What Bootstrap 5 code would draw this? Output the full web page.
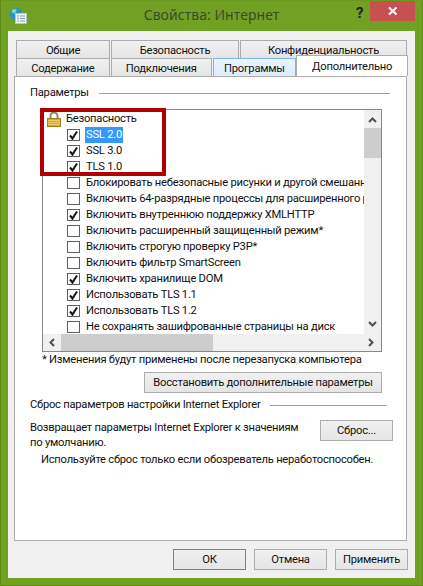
<!DOCTYPE html>
<html lang="ru">
<head>
<meta charset="utf-8">
<title>Свойства: Интернет</title>
<link rel="stylesheet" href="https://cdn.jsdelivr.net/npm/bootstrap@5.3.0/dist/css/bootstrap.min.css">
<style>
html,body{margin:0;background:#71a122;}
body{font-family:Roboto,"Liberation Sans",Arial,sans-serif;font-size:11.2px;letter-spacing:-.24px;line-height:16px;color:#111;}
.win{width:423px;height:586px;background:#71a122;border:1px solid #5f8a1a;border-top-color:#6c9a20;padding:0 7px 7px;box-sizing:border-box;overflow:hidden;}
.tbar{height:30px;position:relative;}
.ttl{font-family:"Noto Sans",sans-serif;font-size:14px;color:#3c4a2c;line-height:28px;letter-spacing:.05px;flex:1;text-align:center;}
.appicon{position:absolute;left:1px;top:6px;}
.qm{position:absolute;left:348px;top:2px;font-weight:700;font-size:15px;line-height:20px;color:#222;}
.closer{position:absolute;left:362px;top:0;width:45px;height:20px;background:#c75050;color:#fff;display:flex;align-items:center;justify-content:center;}
.pane{background:#f0f0f0;height:547px;box-sizing:border-box;border:1px solid #5f8a1a;border-width:0 1px 1px 0;border-color:#f0f0f0;padding:9px 6px 0 6px;}
.tabrow{display:flex;height:18px;margin-left:2px;}
.tabx{border:1px solid #acacac;border-bottom:0;background:linear-gradient(#f0f0f0,#e5e5e5);text-align:center;box-sizing:border-box;line-height:19px;margin-right:1px;white-space:nowrap;}
.t1{width:94px}.t2{width:128px}.t3{width:167px}
.t4{width:94px}.t5{width:101px}.t6{width:84px;background:linear-gradient(#ecf4fc,#dcecfc);border-color:#7eb4ea;margin-right:0}
.t7{width:112px;height:21px;margin-top:-3px;background:#fff;position:relative;z-index:2;line-height:21px;margin-right:0;}
.page{height:465px;background:#fff;border:1px solid #acacac;box-sizing:border-box;padding:0 0 0 15px;margin-top:0;width:393px;}
.legend{display:flex;align-items:center;height:16px;margin-top:8px;padding-right:16px;}
.legend i{flex:1;height:1px;background:#a0a0a0;margin-left:10px;}
.lbox{position:relative;margin:8px 0 0 12px;width:340px;height:243px;border:1px solid #828790;box-sizing:border-box;}
.redmark{position:absolute;left:-3px;top:-2px;width:126px;height:68px;border:4px solid #b00000;z-index:3;}
.lview{height:224px;width:321px;overflow:hidden;white-space:nowrap;}
.lrow{height:16px;display:flex;align-items:center;padding-left:24px;}
.lhead{padding-left:4px;margin-top:1px;gap:5px;}
.lockic{margin-top:1px;flex:none;}
.cb{width:13px;height:12px;border:1px solid #606060;background:#fff;flex:none;margin-right:6px;display:flex;align-items:center;justify-content:center;}
.sel{background:#3399ff;color:#fff;padding:0 1px;margin-left:-1px;}
.vs{position:absolute;right:0;top:0;width:17px;height:224px;background:#f0f0f0;}
.hs{position:absolute;left:0;bottom:0;width:338px;height:17px;background:#f0f0f0;}
.vs b{position:absolute;left:0;top:18px;width:17px;height:30px;background:#cdcdcd;}
.hs b{position:absolute;left:18px;top:0;width:152px;height:17px;background:#cdcdcd;}
.vs svg,.hs svg{position:absolute;}
.note{margin:0 0 0 12px;height:16px;white-space:nowrap;}
.winbtn{border:1px solid #acacac;background:linear-gradient(#f0f0f0,#e5e5e5);border-radius:0;font-size:11.2px;letter-spacing:-.24px;line-height:16px;padding:0;color:#111;height:21px;}
.winbtn:hover{border-color:#acacac;color:#111;background:linear-gradient(#f0f0f0,#e5e5e5);}
.restore{width:238px;margin-left:114px;margin-top:4px;display:block;}
.legend2{margin-top:4px;padding-right:19px;}
.resetrow{margin-left:0;padding-right:13px;display:flex;justify-content:space-between;margin-top:7px;height:29px;}
.resettxt{width:278px;line-height:15px;}
.resetbtn{width:73px;margin-top:0;}
.warn{margin:3px 0 0 11px;white-space:nowrap;}
.foot{display:flex;justify-content:flex-end;gap:8px;margin-top:8px;padding-right:0;width:394px;}
.foot .winbtn{width:73px;}
.okb{border-color:#3c90e0 !important;}
</style>
</head>
<body>
<div class="win">
  <div class="tbar d-flex">
    <svg class="appicon" width="18" height="18" viewBox="0 0 18 18"><circle cx="7" cy="7" r="6.5" fill="#2f8fc8"/><path d="M2 4c2-2 4-3 6-2 1 2-1 3-2 5-2 0-3 0-4-3z" fill="#4fb56a"/><path d="M8 9c2-1 4 0 4 1l-3 3c-1-1-1-3-1-4z" fill="#56b878"/><circle cx="5" cy="4" r="2" fill="#a8e0f0" opacity=".7"/><rect x="6.5" y="6.5" width="11" height="10" fill="#f6f8fa" stroke="#b8c4d0"/><path d="M11 9h5M11 11.5h5M11 14h5" stroke="#7a92ac"/><path d="M8.500 9h1M8.500 11.500h1M8.500 14h1" stroke="#2f7fc0" stroke-width="1.500"/></svg>
    <div class="ttl">Свойства: Интернет</div>
    <div class="qm">?</div>
    <div class="closer"><svg width="10" height="10" viewBox="0 0 10 10"><path d="M1 1.500l7.500 7M8.500 1.500L1 8.500" stroke="#fff" stroke-width="2"/></svg></div>
  </div>
  <div class="pane">
    <div class="tabrow"><div class="tabx t1">Общие</div><div class="tabx t2">Безопасность</div><div class="tabx t3">Конфиденциальность</div></div>
    <div class="tabrow"><div class="tabx t4">Содержание</div><div class="tabx t5">Подключения</div><div class="tabx t6">Программы</div><div class="tabx t7">Дополнительно</div></div>
    <div class="page">
      <div class="legend"><span>Параметры</span><i></i></div>
      <div class="lbox">
        <div class="redmark"></div>
        <div class="lview">
          <div class="lrow lhead"><svg class="lockic" width="14" height="15" viewBox="0 0 14 15"><path d="M3.500 7V4a3.500 3.500 0 0 1 7 0V7" fill="none" stroke="#8f8a62" stroke-width="2"/><rect x=".5" y="6.500" width="13" height="8" fill="#d9a52f" stroke="#a37f20"/><path d="M1 8.500h12M1 10.500h12M1 12.500h12" stroke="#f2cf62"/></svg><span>Безопасность</span></div>
          <div class="lrow"><span class="cb"><svg width="11" height="11" viewBox="0 0 11 11"><path d="M2 5.500l2.500 3L9 1.500" fill="none" stroke="#111" stroke-width="2"/></svg></span><span class="sel">SSL 2.0</span></div>
          <div class="lrow"><span class="cb"><svg width="11" height="11" viewBox="0 0 11 11"><path d="M2 5.500l2.500 3L9 1.500" fill="none" stroke="#111" stroke-width="2"/></svg></span><span>SSL 3.0</span></div>
          <div class="lrow"><span class="cb"><svg width="11" height="11" viewBox="0 0 11 11"><path d="M2 5.500l2.500 3L9 1.500" fill="none" stroke="#111" stroke-width="2"/></svg></span><span>TLS 1.0</span></div>
          <div class="lrow"><span class="cb"></span><span>Блокировать небезопасные рисунки и другой смешанный контент</span></div>
          <div class="lrow"><span class="cb"></span><span>Включить 64-разрядные процессы для расширенного режима</span></div>
          <div class="lrow"><span class="cb"><svg width="11" height="11" viewBox="0 0 11 11"><path d="M2 5.500l2.500 3L9 1.500" fill="none" stroke="#111" stroke-width="2"/></svg></span><span>Включить внутреннюю поддержку XMLHTTP</span></div>
          <div class="lrow"><span class="cb"></span><span>Включить расширенный защищенный режим*</span></div>
          <div class="lrow"><span class="cb"></span><span>Включить строгую проверку P3P*</span></div>
          <div class="lrow"><span class="cb"></span><span>Включить фильтр SmartScreen</span></div>
          <div class="lrow"><span class="cb"><svg width="11" height="11" viewBox="0 0 11 11"><path d="M2 5.500l2.500 3L9 1.500" fill="none" stroke="#111" stroke-width="2"/></svg></span><span>Включить хранилище DOM</span></div>
          <div class="lrow"><span class="cb"><svg width="11" height="11" viewBox="0 0 11 11"><path d="M2 5.500l2.500 3L9 1.500" fill="none" stroke="#111" stroke-width="2"/></svg></span><span>Использовать TLS 1.1</span></div>
          <div class="lrow"><span class="cb"><svg width="11" height="11" viewBox="0 0 11 11"><path d="M2 5.500l2.500 3L9 1.500" fill="none" stroke="#111" stroke-width="2"/></svg></span><span>Использовать TLS 1.2</span></div>
          <div class="lrow"><span class="cb"></span><span>Не сохранять зашифрованные страницы на диск</span></div>
        </div>
        <div class="vs"><svg style="left:4px;top:7px" width="9" height="6" viewBox="0 0 9 6"><path d="M1 5l3.500-3.500L8 5" fill="none" stroke="#505050" stroke-width="2"/></svg><b></b><svg style="left:4px;bottom:7px" width="9" height="6" viewBox="0 0 9 6"><path d="M1 1l3.500 3.500L8 1" fill="none" stroke="#505050" stroke-width="2"/></svg></div>
        <div class="hs"><svg style="left:6px;top:4px" width="6" height="9" viewBox="0 0 6 9"><path d="M5 1L1.500 4.500 5 8" fill="none" stroke="#505050" stroke-width="2"/></svg><b></b><svg style="right:7px;top:4px" width="6" height="9" viewBox="0 0 6 9"><path d="M1 1l3.500 3.500L1 8" fill="none" stroke="#505050" stroke-width="2"/></svg></div>
      </div>
      <div class="note">* Изменения будут применены после перезапуска компьютера</div>
      <button type="button" class="btn winbtn restore">Восстановить дополнительные параметры</button>
      <div class="legend legend2"><span>Сброс параметров настройки Internet Explorer</span><i></i></div>
      <div class="resetrow"><div class="resettxt">Возвращает параметры Internet Explorer к значениям по умолчанию.</div><button type="button" class="btn winbtn resetbtn">Сброс...</button></div>
      <div class="warn">Используйте сброс только если обозреватель неработоспособен.</div>
    </div>
    <div class="foot"><button type="button" class="btn winbtn okb">ОК</button><button type="button" class="btn winbtn">Отмена</button><button type="button" class="btn winbtn">Применить</button></div>
  </div>
</div>
<script src="https://cdn.jsdelivr.net/npm/bootstrap@5.3.0/dist/js/bootstrap.bundle.min.js"></script>
</body>
</html>
